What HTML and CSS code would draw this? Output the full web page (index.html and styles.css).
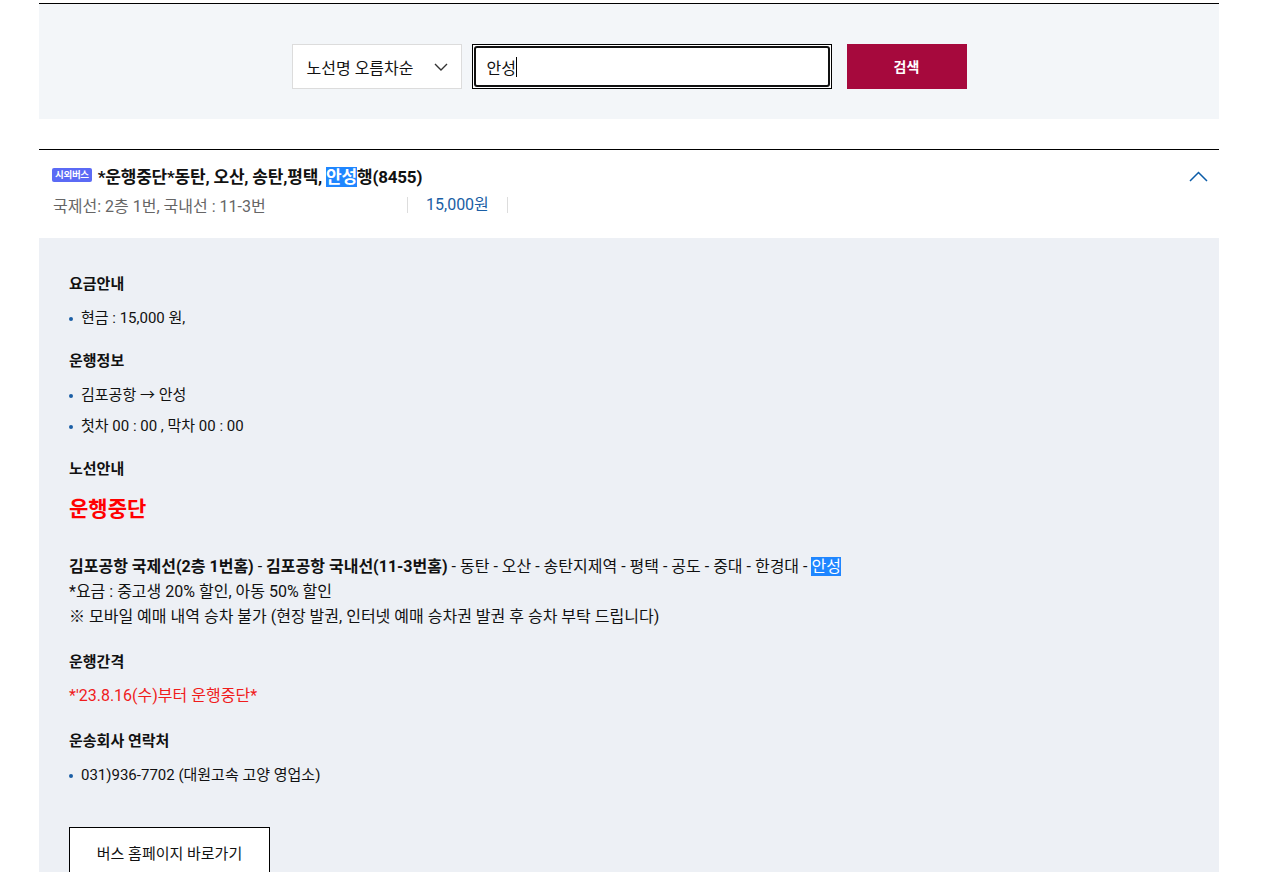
FILE: index.html
```html
<!DOCTYPE html>
<html lang="ko">
<head>
    <meta charset="UTF-8">
    <meta name="viewport" content="width=device-width, initial-scale=1.0">
    <title>노선 검색</title>
    <link rel="stylesheet" href="styles.css">
</head>
<body>
    <div class="wrap">
        <div class="search-box">
            <div class="select">
                <span>노선명 오름차순</span>
                <svg class="select-arrow" width="14" height="8" viewBox="0 0 14 8"><path d="M1 1 L7 7 L13 1" fill="none" stroke="#333" stroke-width="1.4"/></svg>
            </div>
            <div class="search-input">
                <div class="search-field">안성<span class="caret"></span></div>
            </div>
            <button class="search-btn">검색</button>
        </div>

        <div class="result">
            <div class="result-head">
                <div class="result-title">
                    <span class="badge">시외버스</span>
                    <strong>*운행중단*동탄, 오산, 송탄,평택, <mark>안성</mark>행(8455)</strong>
                </div>
                <div class="result-meta">
                    <span class="gate">국제선: 2층 1번, 국내선 : 11-3번</span>
                    <span class="price">15,000원</span>
                </div>
                <svg class="toggle" width="19" height="11" viewBox="0 0 19 11"><path d="M1 10 L9.5 1.5 L18 10" fill="none" stroke="#0b5ca8" stroke-width="1.5"/></svg>
            </div>

            <div class="detail">
                <h4>요금안내</h4>
                <ul class="dots">
                    <li>현금 : 15,000 원,</li>
                </ul>

                <h4>운행정보</h4>
                <ul class="dots">
                    <li>김포공항 → 안성</li>
                    <li>첫차 00 : 00 , 막차 00 : 00</li>
                </ul>

                <h4>노선안내</h4>
                <p class="stop-notice">운행중단</p>
                <div class="route">
                    <p><b>김포공항 국제선(2층 1번홈)</b> - <b>김포공항 국내선(11-3번홈)</b> - 동탄 - 오산 - 송탄지제역 - 평택 - 공도 - 중대 - 한경대 - <mark>안성</mark></p>
                    <p>*요금 : 중고생 20% 할인, 아동 50% 할인</p>
                    <p>※ 모바일 예매 내역 승차 불가 (현장 발권, 인터넷 예매 승차권 발권 후 승차 부탁 드립니다)</p>
                </div>

                <h4>운행간격</h4>
                <p class="red-text">*'23.8.16(수)부터 운행중단*</p>

                <h4>운송회사 연락처</h4>
                <ul class="dots">
                    <li>031)936-7702 (대원고속 고양 영업소)</li>
                </ul>

                <a class="home-link" href="#">버스 홈페이지 바로가기</a>
            </div>
        </div>
    </div>
</body>
</html>
```

FILE: styles.css
```css
body {
    margin: 0;
    font-family: Roboto, "Noto Sans CJK KR", sans-serif;
    color: #111;
    background: #fff;
}
.wrap {
    width: 1180px;
    margin-left: 39px;
    padding-top: 3px;
}
.search-box {
    display: flex;
    justify-content: center;
    align-items: flex-start;
    border-top: 1px solid #000;
    background-color: #f3f6f9;
    padding: 40px 0 30px;
}
.select {
    box-sizing: border-box;
    width: 170px;
    height: 45px;
    border: 1px solid #dcdcdc;
    background: #fff;
    display: flex;
    align-items: center;
    justify-content: space-between;
    padding: 0 13px 0 14px;
    font-size: 16px;
    margin-right: 10px;
}
.search-input {
    box-sizing: border-box;
    width: 360px;
    height: 45px;
    border: 1px solid #000;
    padding: 1px;
    background: #fff;
    margin-right: 15px;
}
.search-field {
    box-sizing: border-box;
    height: 100%;
    border: 2px solid #111;
    border-radius: 3px;
    display: flex;
    align-items: center;
    padding-left: 11px;
    font-size: 16px;
}
.caret {
    display: inline-block;
    width: 1px;
    height: 20px;
    background: #000;
}
.search-btn {
    width: 120px;
    height: 45px;
    border: none;
    background-color: #a6093d;
    color: #fff;
    font-family: inherit;
    font-size: 14px;
    font-weight: bold;
    padding-bottom: 2px;
}
.result {
    margin-top: 30px;
    border-top: 1px solid #000;
}
.result-head {
    position: relative;
    height: 88px;
    padding-left: 13px;
    box-sizing: border-box;
    padding-top: 14px;
}
.result-title {
    display: flex;
    align-items: center;
    font-size: 17px;
    letter-spacing: -0.2px;
    height: 22px;
}
.badge {
    display: inline-block;
    background: #5b6af5;
    color: #fff;
    font-size: 9.5px;
    font-weight: bold;
    letter-spacing: -0.3px;
    line-height: 14px;
    height: 14px;
    padding: 0 3px;
    border-radius: 2px;
    margin-right: 6px;
}
mark {
    background: #1f86ff;
    color: #fff;
}
.result-meta {
    display: flex;
    align-items: center;
    margin-top: 8px;
    font-size: 16px;
    height: 22px;
}
.gate {
    width: 354px;
    color: #666;
    padding-left: 1px;
}
.price {
    color: #1a5ea5;
    font-size: 16px;
    padding: 0 18px;
    border-left: 1px solid #ddd;
    border-right: 1px solid #ddd;
    line-height: 16px;
}
.toggle {
    position: absolute;
    right: 11px;
    top: 21px;
}
.detail {
    background-color: #edf0f5;
    padding: 35px 30px 0;
    height: 600px;
}
.detail h4 {
    margin: 0 0 12px;
    font-size: 15px;
    line-height: 22px;
}
.dots {
    list-style: none;
    margin: 0 0 21px;
    padding: 0;
    font-size: 15px;
}
.dots li {
    position: relative;
    padding-left: 12px;
    line-height: 22px;
    margin-bottom: 9px;
}
.dots li:last-child {
    margin-bottom: 0;
}
.dots li::before {
    content: "";
    position: absolute;
    left: 0;
    top: 10px;
    width: 4px;
    height: 4px;
    border-radius: 50%;
    background: #1a5ea5;
}
.stop-notice {
    margin: 15px 0 30px;
    color: #f00;
    font-size: 21px;
    font-weight: bold;
    line-height: 29px;
}
.route {
    margin-bottom: 22px;
    font-size: 16px;
}
.route p {
    margin: 0;
    line-height: 25px;
}
.red-text {
    margin: 0 0 23px;
    color: #f01c1c;
    font-size: 16px;
    line-height: 22px;
}
.home-link {
    display: flex;
    align-items: center;
    justify-content: center;
    box-sizing: border-box;
    width: 201px;
    height: 50px;
    margin-top: 41px;
    border: 1px solid #000;
    background: #fff;
    color: #111;
    text-decoration: none;
    font-size: 15px;
}
```
